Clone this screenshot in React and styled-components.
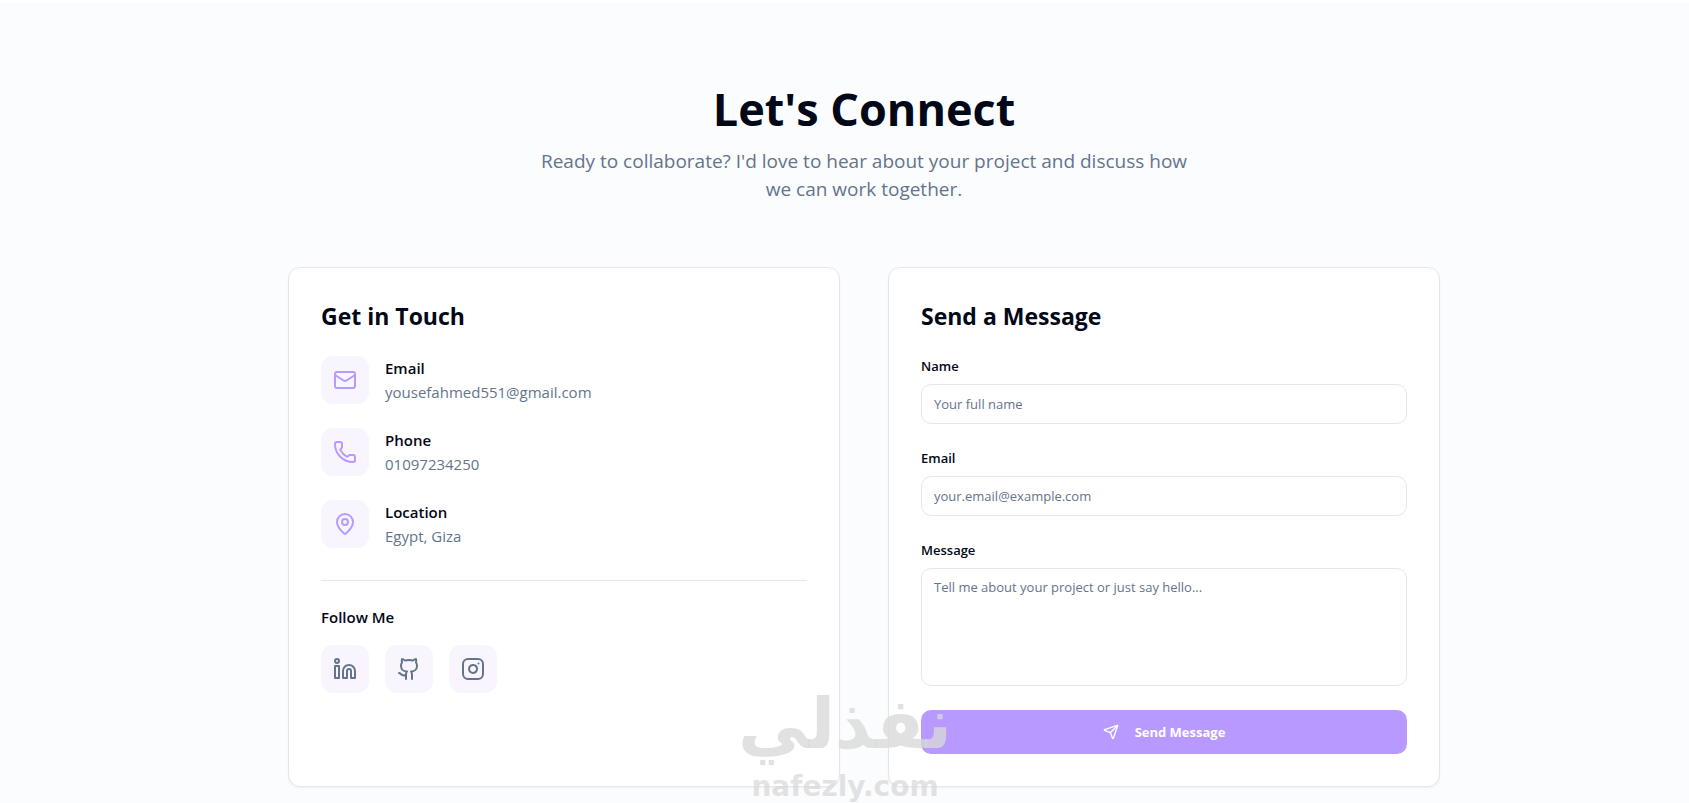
import React from "react"
import styled, { createGlobalStyle, ThemeProvider } from "styled-components"
import {
  Mail,
  Phone,
  MapPin,
  Linkedin,
  Github,
  Instagram,
  Send,
} from "lucide-react"

const theme = {
  color: {
    page: "#fbfcfe",
    white: "#ffffff",
    text: "#020817",
    muted: "#64748b",
    border: "#e5e7eb",
    primary: "#b899ff",
    tint: "#f8f5ff",
  },
  font: `"Segoe UI", "Open Sans", "Noto Sans", sans-serif`,
}

const GlobalStyle = createGlobalStyle`
  *, *::before, *::after {
    box-sizing: border-box;
  }

  body {
    margin: 0;
    background: ${theme.color.page};
    color: ${theme.color.text};
    font-family: ${theme.font};
    font-size: 16px;
    line-height: 24px;
  }

  h1, h2, h3, h4, p, ul, dl, dd {
    margin: 0;
    padding: 0;
  }
`

//Section
const Section = styled.section`
  border-top: 3px solid ${props => props.theme.color.white};
  padding: 80px 24px 16px 24px;

  @media screen and (min-width: 1200px) {
    padding-left: 63px;
  }
`

const Container = styled.div`
  position: relative;
  max-width: 1152px;
  margin: 0 auto;
`

//Intro
const Intro = styled.header`
  max-width: 672px;
  margin: 0 auto 64px;
  text-align: center;
`

const Title = styled.h1`
  font-size: 45px;
  line-height: 52px;
  font-weight: 700;
  margin-bottom: 12px;
`

const Lead = styled.p`
  font-size: 19px;
  line-height: 28px;
  color: ${props => props.theme.color.muted};
`

//Cards
const Columns = styled.div`
  display: grid;
  gap: 48px;

  @media screen and (min-width: 992px) {
    grid-template-columns: repeat(2, 1fr);
  }
`

const Card = styled.div`
  padding: 32px;
  background: ${props => props.theme.color.white};
  border: 1px solid ${props => props.theme.color.border};
  border-radius: 12px;
  box-shadow: 0 1px 2px rgba(0, 0, 0, 0.05);
`

const CardTitle = styled.h2`
  font-size: 23px;
  line-height: 32px;
  font-weight: 700;
  margin-bottom: 24px;
`

//Contact details
const ContactList = styled.ul`
  display: grid;
  gap: 24px;
  list-style: none;
`

const ContactItem = styled.li`
  display: flex;
  align-items: center;
  gap: 16px;
`

const IconTile = styled.span`
  display: flex;
  align-items: center;
  justify-content: center;
  flex: none;
  width: 48px;
  height: 48px;
  border-radius: 12px;
  background: ${props => props.theme.color.tint};
  color: ${props =>
    props.$muted ? props.theme.color.muted : props.theme.color.primary};
`

const ContactLabel = styled.h3`
  font-size: 15px;
  line-height: 24px;
  font-weight: 600;
`

const ContactValue = styled.p`
  font-size: 15px;
  line-height: 24px;
  color: ${props => props.theme.color.muted};
`

//Follow
const Follow = styled.div`
  margin-top: 32px;
  padding-top: 24px;
  border-top: 1px solid ${props => props.theme.color.border};
`

const SocialRow = styled.div`
  display: flex;
  gap: 16px;
  margin-top: 16px;
`

const SocialLink = styled.a`
  text-decoration: none;
  border-radius: 12px;
`

//Form
const Form = styled.form`
  display: grid;
  gap: 24px;
`

const Field = styled.div`
  display: grid;
  gap: 8px;
`

const Label = styled.label`
  font-size: 13px;
  line-height: 20px;
  font-weight: 600;
`

const Input = styled.input`
  width: 100%;
  height: 40px;
  padding: 8px 12px;
  border: 1px solid ${props => props.theme.color.border};
  border-radius: 10px;
  background: ${props => props.theme.color.white};
  color: ${props => props.theme.color.text};
  font-family: inherit;
  font-size: 13px;
  line-height: 20px;
  outline: none;

  &::placeholder {
    color: ${props => props.theme.color.muted};
    opacity: 1;
  }

  &:focus {
    border-color: ${props => props.theme.color.primary};
  }
`

const TextArea = styled(Input).attrs({ as: "textarea" })`
  display: block;
  height: 118px;
  resize: none;
`

const SubmitButton = styled.button`
  display: flex;
  align-items: center;
  justify-content: center;
  gap: 16px;
  width: 100%;
  height: 44px;
  border: 0;
  border-radius: 10px;
  background: ${props => props.theme.color.primary};
  color: ${props => props.theme.color.white};
  font-family: inherit;
  font-size: 13px;
  line-height: 20px;
  font-weight: 700;
  cursor: pointer;
`

//Watermark
const Watermark = styled.div`
  position: absolute;
  left: 50%;
  bottom: -16px;
  width: 240px;
  margin-left: -139px;
  text-align: center;
  font-family: "DejaVu Sans", sans-serif;
  font-weight: 700;
  color: rgba(216, 216, 216, 0.78);
  pointer-events: none;
`

const WatermarkName = styled.div`
  font-size: 70px;
  line-height: 70px;
  margin-bottom: 12px;
`

const WatermarkSite = styled.div`
  font-size: 28px;
  line-height: 32px;
  opacity: 0.9;
`

const contacts = [
  { label: "Email", value: "yousefahmed551@gmail.com", icon: Mail },
  { label: "Phone", value: "01097234250", icon: Phone },
  { label: "Location", value: "Egypt, Giza", icon: MapPin },
]

const socials = [
  { name: "LinkedIn", icon: Linkedin },
  { name: "GitHub", icon: Github },
  { name: "Instagram", icon: Instagram },
]

const App = () => {
  return (
    <ThemeProvider theme={theme}>
      <GlobalStyle />
      <Section id="contact">
        <Container>
          <Intro>
            <Title>Let's Connect</Title>
            <Lead>
              Ready to collaborate? I'd love to hear about your project and
              discuss how we can work together.
            </Lead>
          </Intro>

          <Columns>
            <Card>
              <CardTitle>Get in Touch</CardTitle>
              <ContactList>
                {contacts.map(({ label, value, icon: Icon }) => (
                  <ContactItem key={label}>
                    <IconTile>
                      <Icon size={24} />
                    </IconTile>
                    <div>
                      <ContactLabel>{label}</ContactLabel>
                      <ContactValue>{value}</ContactValue>
                    </div>
                  </ContactItem>
                ))}
              </ContactList>
              <Follow>
                <ContactLabel>Follow Me</ContactLabel>
                <SocialRow>
                  {socials.map(({ name, icon: Icon }) => (
                    <SocialLink href="#contact" key={name} aria-label={name}>
                      <IconTile $muted>
                        <Icon size={24} />
                      </IconTile>
                    </SocialLink>
                  ))}
                </SocialRow>
              </Follow>
            </Card>

            <Card>
              <CardTitle>Send a Message</CardTitle>
              <Form onSubmit={e => e.preventDefault()}>
                <Field>
                  <Label htmlFor="name">Name</Label>
                  <Input id="name" type="text" placeholder="Your full name" />
                </Field>
                <Field>
                  <Label htmlFor="email">Email</Label>
                  <Input
                    id="email"
                    type="email"
                    placeholder="your.email@example.com"
                  />
                </Field>
                <Field>
                  <Label htmlFor="message">Message</Label>
                  <TextArea
                    id="message"
                    placeholder="Tell me about your project or just say hello..."
                  />
                </Field>
                <SubmitButton type="submit">
                  <Send size={16} />
                  Send Message
                </SubmitButton>
              </Form>
            </Card>
          </Columns>

          <Watermark>
            <WatermarkName lang="ar" dir="rtl">نفذلي</WatermarkName>
            <WatermarkSite>nafezly.com</WatermarkSite>
          </Watermark>
        </Container>
      </Section>
    </ThemeProvider>
  )
}

export default App
